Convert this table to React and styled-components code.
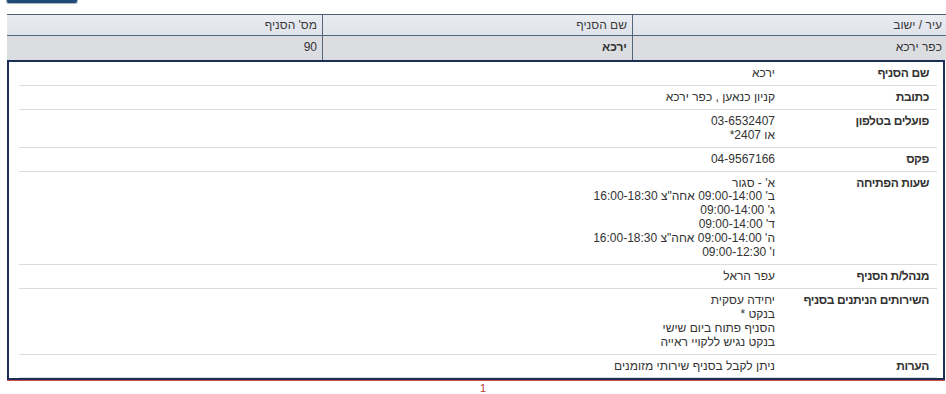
import React from "react";
import styled, { createGlobalStyle } from "styled-components";

const GlobalStyle = createGlobalStyle`
  html, body {
    margin: 0;
    padding: 0;
    background: #ffffff;
  }
  body {
    font-family: "Liberation Sans", Arial, sans-serif;
    font-size: 12px;
    color: #333333;
  }
  * {
    box-sizing: border-box;
  }
`;

const summaryCols = ["עיר / ישוב", "שם הסניף", "מס' הסניף"];
const summaryRow = [
  { text: "כפר ירכא" },
  { text: "ירכא", bold: true },
  { text: "90" },
];

const details = [
  { label: "שם הסניף", lines: ["ירכא"] },
  { label: "כתובת", lines: ["קניון כנאען , כפר ירכא"] },
  { label: "פועלים בטלפון", lines: ["03-6532407", "או 2407*"] },
  { label: "פקס", lines: ["04-9567166"] },
  {
    label: "שעות הפתיחה",
    lines: [
      "א' - סגור",
      "ב' 09:00-14:00 אחה\"צ 16:00-18:30",
      "ג' 09:00-14:00",
      "ד' 09:00-14:00",
      "ה' 09:00-14:00 אחה\"צ 16:00-18:30",
      "ו' 09:00-12:30",
    ],
  },
  { label: "מנהל/ת הסניף", lines: ["עפר הראל"] },
  {
    label: "השירותים הניתנים בסניף",
    lines: [
      "יחידה עסקית",
      "בנקט *",
      "הסניף פתוח ביום שישי",
      "בנקט נגיש ללקויי ראייה",
    ],
  },
  { label: "הערות", lines: ["ניתן לקבל בסניף שירותי מזומנים"] },
];

export default function App() {
  return (
    <>
      <GlobalStyle />
      <Page>
        <ButtonStrip>
          <BackButton />
        </ButtonStrip>
        <Summary>
          {summaryCols.map((c, i) => (
            <HeadCell key={c} last={i === summaryCols.length - 1}>
              {c}
            </HeadCell>
          ))}
          {summaryRow.map((c, i) => (
            <DataCell key={i} bold={c.bold} last={i === summaryRow.length - 1}>
              {c.text}
            </DataCell>
          ))}
        </Summary>
        <DetailBox>
          {details.map((d) => (
            <DetailRow key={d.label}>
              <Label>{d.label}</Label>
              <Value>
                {d.lines.map((l, i) => (
                  <div key={i}>{l}</div>
                ))}
              </Value>
            </DetailRow>
          ))}
        </DetailBox>
        <Pager>1</Pager>
      </Page>
    </>
  );
}

const Page = styled.div`
  width: 940px;
  margin-left: 7px;
  direction: rtl;
`;

const ButtonStrip = styled.div`
  display: flex;
  justify-content: flex-end;
  height: 14px;
`;

const BackButton = styled.div`
  width: 72px;
  height: 4px;
  margin-left: -1px;
  background: #1f4a78;
  border: 1px solid #aeb6c2;
  border-top: none;
  border-radius: 0 0 3px 3px;
`;

const Summary = styled.div`
  display: grid;
  grid-template-columns: 315px 310px 315px;
  border-top: 1px solid #4f5e70;
`;

const HeadCell = styled.div`
  height: 21px;
  line-height: 20px;
  padding: 0 5px;
  background: linear-gradient(#e9ecf1, #dfe3ea);
  border-bottom: 1px solid #55657a;
  border-left: ${(p) => (p.last ? "none" : "1px solid #55657a")};
  color: #3a3a3a;
`;

const DataCell = styled.div`
  height: 24px;
  line-height: 23px;
  padding: 0 5px;
  background: #dcdde1;
  border-left: ${(p) => (p.last ? "none" : "1px solid #55657a")};
  font-weight: ${(p) => (p.bold ? "bold" : "normal")};
  color: #333;
`;

const DetailBox = styled.div`
  width: 938px;
  margin-right: 2px;
  border: 2px solid #1b2f57;
  padding: 0 6px 0 10px;
  box-shadow: 0 1px 0 #d24a4a;
`;

const DetailRow = styled.div`
  display: grid;
  grid-template-columns: 157px 1fr;
  padding: 5px 0 4px;
  line-height: 13.9px;
  border-bottom: 1px solid #dcdcdc;
  &:last-child {
    border-bottom-color: #d6e0ec;
  }
`;

const Label = styled.div`
  padding-right: 8px;
  font-weight: bold;
  letter-spacing: -0.4px;
  color: #333;
`;

const Value = styled.div`
  padding-right: 5px;
  color: #333;
`;

const Pager = styled.div`
  margin-top: 2px;
  padding-left: 12px;
  text-align: center;
  font-size: 11px;
  color: #c0392b;
`;
